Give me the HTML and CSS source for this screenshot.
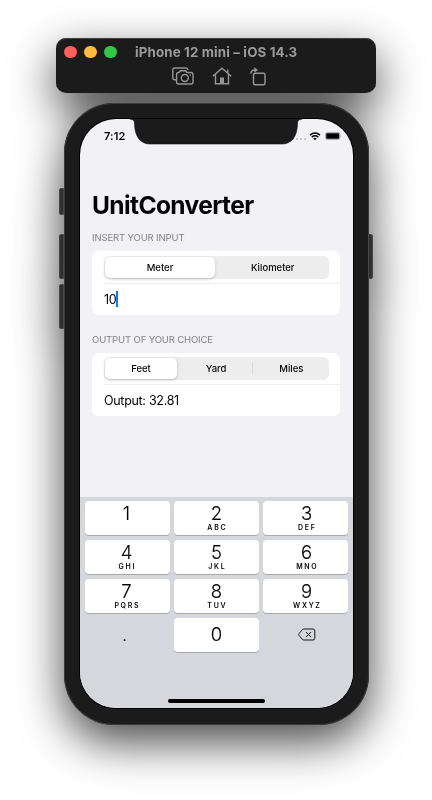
FILE: index.html
```
<!DOCTYPE html>
<html lang="en">
<head>
<meta charset="utf-8">
<title>UnitConverter</title>
<link rel="stylesheet" href="styles.css">
</head>
<body>
<div class="simulator">
  <header class="toolbar">
    <div class="title-row">
      <span class="light red"></span><span class="light yellow"></span><span class="light green"></span>
      <span class="window-title">iPhone 12 mini – iOS 14.3</span>
    </div>
    <div class="tools">
      <svg class="tool-camera" width="22" height="18" viewBox="0 0 22 18"><path d="M4.2 12.8H2.6Q.8 12.8.8 11V3Q.8 1 2.8 1H14Q15.8 1 16 3M7 5.5 8.3 3.8H13.6L15 5.5H19Q21 5.5 21 7.5V15Q21 17 19 17H6.6Q4.6 17 4.6 15V7.5Q4.6 5.5 6.6 5.5Z"/><circle cx="12.8" cy="11" r="3.5"/><circle class="dot" cx="18.2" cy="8" r=".8"/></svg>
      <svg class="tool-home" width="20" height="18" viewBox="0 0 20 18"><path d="M.8 9.2 10 1.1 19.2 9.2M3.5 7.3V16.7H16.5V7.3M15.8 5.8V2.4"/><path class="dot" d="M8 16.5V10.5H12V16.5Z"/></svg>
      <svg class="tool-rotate" width="16" height="19" viewBox="0 0 16 19"><rect x="3.5" y="6.2" width="11.5" height="11.5" rx="1.5"/><path d="M.8 6.8Q.8 3 5 3"/><path class="dot" d="M4.400.300 8 3 4.400 5.700Z"/></svg>
    </div>
  </header>
  <main class="phone">
    <span class="side mute"></span><span class="side up"></span><span class="side down"></span><span class="side power"></span>
    <div class="screen">
      <svg class="notch" width="174" height="26" viewBox="0 0 174 26"><path d="M1-1V.2Q5.500.2 5.500 4C5.500 17 11 25 21 25H153C163 25 168.500 17 168.500 4Q168.500.2 173 .2V-1Z"/></svg>
      <div class="status">
        <span class="time">7:12</span>
        <span class="indicators">
          <span class="signal"><i></i><i></i><i></i><i></i></span>
          <svg width="12" height="9" viewBox="0 0 12 9"><path d="M1 3.1Q6-1 11 3.1M2.8 5.1Q6 2.5 9.200 5.1" fill="none" stroke="#000" stroke-width="1.500"/><path d="M4.300 6.500Q6 5.100 7.700 6.500L6 8.200Z"/></svg>
          <svg width="17" height="8" viewBox="0 0 17 8"><rect x=".5" y=".5" width="14.400" height="7" rx="1.800" fill="none" stroke="#aaa9ad"/><rect x="1.200" y="1.200" width="13" height="5.600" rx=".8"/><path d="M15.800 2.800Q17 4 15.800 5.200Z" fill="#aaa9ad"/></svg>
        </span>
      </div>
      <div class="content">
        <h1>UnitConverter</h1>
        <h2 class="label-in">INSERT YOUR INPUT</h2>
        <section class="card">
          <div class="picker-row"><div class="segments two"><span class="selected">Meter</span><span>Kilometer</span></div></div>
          <div class="value-row"><span>10</span><b class="caret"></b></div>
        </section>
        <h2 class="label-out">OUTPUT OF YOUR CHOICE</h2>
        <section class="card">
          <div class="picker-row"><div class="segments three"><span class="selected">Feet</span><span>Yard</span><span class="divided">Miles</span></div></div>
          <div class="value-row output"><span>Output: 32.81</span></div>
        </section>
      </div>
      <div class="keyboard">
        <div class="keys">
          <div class="key left"><b>1</b></div>
          <div class="key"><b>2</b><small>ABC</small></div>
          <div class="key right"><b>3</b><small>DEF</small></div>
          <div class="key left"><b>4</b><small>GHI</small></div>
          <div class="key"><b>5</b><small>JKL</small></div>
          <div class="key right"><b>6</b><small>MNO</small></div>
          <div class="key left"><b>7</b><small>PQRS</small></div>
          <div class="key"><b>8</b><small>TUV</small></div>
          <div class="key right"><b>9</b><small>WXYZ</small></div>
          <div class="key plain point"><b>.</b></div>
          <div class="key zero"><b>0</b></div>
          <div class="key plain"><svg width="18" height="13" viewBox="0 0 18 13"><path d="M5.800 1H15Q16.800 1 16.800 2.800V10.200Q16.800 12 15 12H5.800Q5 12 4.300 11.300L1 7.300Q.4 6.500 1 5.700L4.300 1.700Q5 1 5.800 1ZM8 4 13 9M13 4 8 9"/></svg></div>
        </div>
        <div class="home-bar"></div>
      </div>
    </div>
  </main>
</div>
</body>
</html>
```
FILE: styles.css
```
* { box-sizing: border-box; }
body {
  margin: 0;
  height: 800px;
  overflow: hidden;
  background: #fff;
  font-family: Inter, "Liberation Sans", sans-serif;
  color: #050505;
}
.simulator {
  height: 800px;
  padding: 38px 56px 0;
  filter: drop-shadow(0 17px 23px rgba(0, 0, 0, .72));
}
.toolbar {
  height: 55px;
  background: #1b1b1b;
  border-radius: 10px;
  box-shadow: inset 0 1px #404040;
}
.title-row { display: flex; align-items: center; height: 28px; padding-left: 8px; }
.light { width: 12.500px; height: 12.500px; border-radius: 50%; margin-right: 7.500px; }
.red { background: #ff5f5b; }
.yellow { background: #fdbc40; }
.green { background: #33c748; }
.window-title { margin-left: 11px; font-size: 13.300px; font-weight: 700; letter-spacing: .15px; color: #9b9b9b; white-space: nowrap; }
.tools { display: flex; align-items: center; padding: 0 0 0 116px; height: 20px; }
.tools svg { fill: none; stroke: #979797; stroke-width: 1.400; }
.tools .dot { fill: #979797; stroke: none; }
.tool-home { margin-left: 18px; }
.tool-rotate { margin-left: 18px; }
.phone {
  position: relative;
  width: 304.500px;
  height: 622px;
  margin: 10px 0 0 8px;
  padding: 16px;
  background: #1b1b1b;
  border-radius: 50px;
  box-shadow: inset 0 0 0 1px #3b3b3b;
}
.side { position: absolute; width: 5px; background: #303030; border: 1px solid #484848; border-radius: 2px 0 0 2px; left: -5px; }
.mute { top: 85px; height: 27px; }
.up { top: 131px; height: 45px; }
.down { top: 181px; height: 45px; }
.power { left: auto; right: -4.500px; top: 131px; height: 45px; border-radius: 0 2px 2px 0; }
.screen {
  position: relative;
  display: flex;
  flex-direction: column;
  width: 272.500px;
  height: 589px;
  background: #f2f1f6;
  border-radius: 36px;
  overflow: hidden;
  box-shadow: 0 0 0 1px #000;
}
.notch { position: absolute; left: 49px; top: 0; fill: #1b1b1b; stroke: #111; stroke-width: .6; }
.status { display: flex; justify-content: space-between; align-items: center; height: 34px; padding: 0 11px 0 24px; }
.time { font-size: 11px; font-weight: 600; letter-spacing: .1px; }
.indicators { display: flex; align-items: center; gap: 4px; }
.signal { display: flex; gap: 2px; margin-right: -1px; }
.signal i { width: 2px; height: 2px; border-radius: 1px; background: #bdbcc1; margin-top: 5px; }
.content { height: 344px; padding: 0 12.500px 0 12px; }
h1 { margin: 36px 0 0; font-size: 24.500px; line-height: 32px; letter-spacing: -.6px; font-weight: 700; white-space: nowrap; }
h2 { margin: 0; font-size: 9.500px; font-weight: 400; line-height: 14px; letter-spacing: -.13px; color: #838287; white-space: nowrap; }
.label-in { margin-top: 10px; }
.label-out { margin-top: 18px; }
.card { margin-top: 6px; height: 63.500px; background: #fff; border-radius: 7px; }
.picker-row { height: 31.500px; padding: 4.500px 11.500px 0 12px; }
.segments { display: grid; height: 23px; padding: 1px; background: #ededee; border-radius: 6px; font-size: 9.500px; font-weight: 500; }
.two { grid-template-columns: 110px 1fr; }
.three { grid-template-columns: 72px 1fr 1fr; }
.segments span { display: flex; justify-content: center; align-items: center; padding-left: 3px; }
.segments .selected { padding-left: 0; background: #fff; border-radius: 5px; box-shadow: 0 1px 3px rgba(0, 0, 0, .22); }
.segments .divided { background: linear-gradient(#dadadc, #dadadc) left center / 1px 13px no-repeat; }
.value-row { display: flex; align-items: center; height: 32px; margin-left: 12px; border-top: 1px solid #eeeef0; font-size: 12.500px; letter-spacing: -.3px; }
.caret { width: 2px; height: 16px; margin-left: -.5px; background: #0a7aff; }
.keyboard { flex: 1; background: #d6d7dc; padding: 4px 5px 0; }
.keys { display: grid; grid-template-columns: repeat(3, 85px); gap: 5px 4px; }
.key { display: flex; flex-direction: column; align-items: center; height: 34px; background: #fff; border-radius: 4px; box-shadow: 0 1px #a9aaae; }
.key.left { padding-right: 2px; }
.key.right { padding-left: 2px; }
.key b { font-size: 18.500px; line-height: 24px; font-weight: 300; -webkit-text-stroke: .15px #050505; }
.key small { font-size: 7px; line-height: 8px; font-weight: 600; letter-spacing: 1.700px; padding-left: 1.700px; margin-top: -1px; }
.key.zero { justify-content: center; padding-bottom: 2px; }
.key.plain { justify-content: center; background: none; box-shadow: none; }
.key.point { padding-right: 6px; }
.key.point b { font-size: 16px; }
.key.plain svg { margin: -2px 0 0 2px; fill: none; stroke: #151515; stroke-width: 1; }
.home-bar { width: 97px; height: 3.500px; margin: 47px auto 0; background: #000; border-radius: 2px; }
```
